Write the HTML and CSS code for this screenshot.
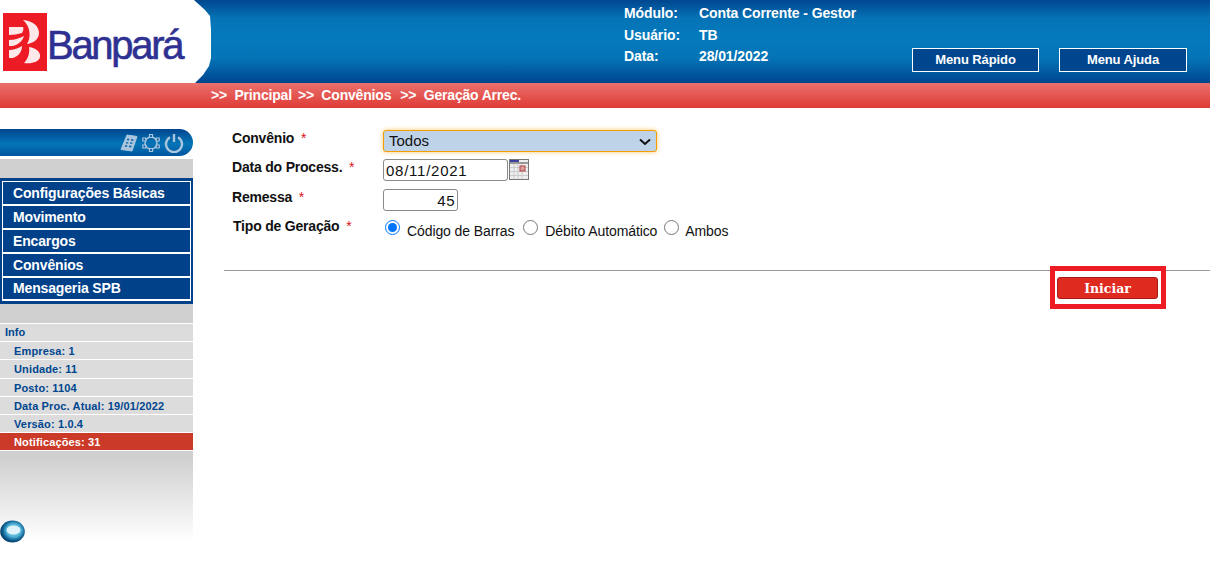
FILE: index.html
```html
<!DOCTYPE html>
<html lang="pt-BR">
<head>
<meta charset="utf-8">
<title>Banpará</title>
<link rel="stylesheet" href="styles.css">
</head>
<body>
<header class="top">
  <div class="logo">
    <svg class="logo-mark" viewBox="0 0 44 58" width="44" height="58" aria-hidden="true">
      <rect width="44" height="58" fill="#ed1c24"/>
      <path d="M20 7 C30 8 36 13 36 20 C36 26 31 30 24 31 C28 25 28 14 20 7 Z M6 14 L20 14 C21 16 20 18 19 20 C15 21 10 22 6 22 Z M6 27 C12 27 17 25 21 23 C20 27 17 30 13 32 C11 33 8 33 6 33 Z M6 37 C11 37 16 35 19 33 C19 38 16 43 10 45 L6 45 Z M26 34 C33 35 38 39 37 44 C36 49 29 51 21 50 C25 46 27 40 26 34 Z" fill="#fff" opacity=".9"/>
    </svg>
    <span class="logo-text">Banpará</span>
  </div>
  <dl class="session">
    <div class="session-row"><dt>Módulo:</dt><dd>Conta Corrente - Gestor</dd></div>
    <div class="session-row"><dt>Usuário:</dt><dd>TB</dd></div>
    <div class="session-row"><dt>Data:</dt><dd>28/01/2022</dd></div>
  </dl>
  <div class="top-buttons">
    <a class="top-btn">Menu Rápido</a>
    <a class="top-btn top-btn-last">Menu Ajuda</a>
  </div>
</header>
<nav class="crumbs">
  <span>&gt;&gt;&nbsp; Principal</span>
  <span>&gt;&gt;&nbsp; Convênios</span>
  <span class="crumb-last">&gt;&gt;&nbsp; Geração Arrec.</span>
</nav>
<div class="page">
  <aside class="side">
    <div class="pill">
      <svg class="pill-icon" viewBox="0 0 18 18" width="18" height="18" aria-hidden="true">
        <path d="M7 1 L17 2.500 L12 17 L1 15.500 Z" fill="#a9c6de" stroke="#a9c6de" stroke-linejoin="round"/>
        <path d="M7 5.500h2.200M11 6h2.400M6 8.800h2.200M10 9.200h2.400M5 12h2.200M9 12.500h2.400" stroke="#0a5ea6" stroke-width="1.300" fill="none"/>
      </svg>
      <svg class="pill-icon" viewBox="0 0 20 20" width="20" height="20" aria-hidden="true">
        <circle cx="10" cy="10" r="6" fill="none" stroke="#a9c6de" stroke-width="1.500"/>
        <path d="M8.500 1.500h3v3h-3zM8.500 15.500h3v3h-3zM1.800 5h3v3h-3zM15.200 5h3v3h-3zM1.800 12h3v3h-3zM15.200 12h3v3h-3z" fill="#0a5ea6" stroke="#a9c6de" stroke-width="1.200"/>
      </svg>
      <svg class="pill-icon" viewBox="0 0 20 20" width="20" height="20" aria-hidden="true">
        <path d="M6 4.200A8 8 0 1 0 14 4.200" fill="none" stroke="#a9c6de" stroke-width="2.400"/>
        <path d="M10 1v8" stroke="#a9c6de" stroke-width="2.400"/>
      </svg>
    </div>
    <div class="side-body">
      <ul class="menu">
        <li>Configurações Básicas</li>
        <li>Movimento</li>
        <li>Encargos</li>
        <li>Convênios</li>
        <li class="menu-last">Mensageria SPB</li>
      </ul>
      <ul class="info">
        <li class="info-head">Info</li>
        <li>Empresa: 1</li>
        <li>Unidade: 11</li>
        <li>Posto: 1104</li>
        <li>Data Proc. Atual: 19/01/2022</li>
        <li>Versão: 1.0.4</li>
        <li class="info-alert">Notificações: 31</li>
      </ul>
      <svg class="orb" viewBox="0 0 25 23" width="25" height="23" aria-hidden="true">
        <defs>
          <radialGradient id="orbfill" cx=".55" cy=".45" r=".6">
            <stop offset="0" stop-color="#a8e2f2"/>
            <stop offset=".5" stop-color="#4fb0d6"/>
            <stop offset=".75" stop-color="#0b5f90"/>
            <stop offset="1" stop-color="#052f55"/>
          </radialGradient>
        </defs>
        <ellipse cx="12.500" cy="11.500" rx="12.300" ry="11" fill="url(#orbfill)"/>
        <ellipse cx="13.500" cy="10" rx="7" ry="4.500" fill="#dff4fa"/>
      </svg>
    </div>
  </aside>
  <main class="content">
    <form class="form">
      <label class="lbl lbl-a">Convênio <b>*</b></label>
      <div class="sel-wrap">
        <select class="sel"><option>Todos</option></select>
        <svg class="chev" viewBox="0 0 12 8" width="12" height="8" aria-hidden="true"><path d="M1 1.500 L6 6 L11 1.500" fill="none" stroke="#111" stroke-width="2"/></svg>
      </div>
      <label class="lbl lbl-b">Data do Process. <b>*</b></label>
      <div class="date-wrap">
        <input class="txt date" type="text" value="08/11/2021">
        <svg class="cal" viewBox="0 0 20 21" width="20" height="21" aria-hidden="true">
          <rect x=".5" y=".5" width="19" height="20" fill="#eee" stroke="#777"/>
          <rect x="1" y="1" width="9" height="2" fill="#3b3f9e"/>
          <rect x="1" y="3" width="18" height="2" fill="#999"/>
          <path d="M1 8.500h18M1 12.500h18M1 16.500h18M5 5v15M9 5v15M13 5v15" stroke="#ccc"/>
          <rect x="11" y="7" width="5" height="5" fill="#d9a0a0" stroke="#b04040"/>
        </svg>
      </div>
      <label class="lbl lbl-c">Remessa <b>*</b></label>
      <input class="txt num" type="text" value="45">
      <label class="lbl lbl-d">Tipo de Geração <b>*</b></label>
      <div class="radios">
        <input type="radio" name="t" id="r1" checked><label for="r1">Código de Barras</label>
        <input type="radio" name="t" id="r2"><label for="r2">Débito Automático</label>
        <input type="radio" name="t" id="r3"><label for="r3">Ambos</label>
      </div>
    </form>
    <div class="actions">
      <div class="frame"><button class="start" type="button">Iniciar</button></div>
    </div>
  </main>
</div>
</body>
</html>
```
FILE: styles.css
```css
* { box-sizing: border-box; }
html, body { margin: 0; padding: 0; background: #fff; }
body { font-family: "Liberation Sans", Arial, sans-serif; color: #111; width: 1210px; height: 561px; overflow: hidden; }

.top {
  height: 83px;
  display: flex;
  background: linear-gradient(#00468f 0%, #0573b5 22%, #047abd 45%, #0474b6 70%, #00468f 100%);
  color: #fff;
  font-weight: bold;
  font-size: 14px;
  letter-spacing: -.1px;
}
.logo {
  width: 212px;
  height: 83px;
  background: #fff;
  clip-path: polygon(0 0, 194px 0, 205px 10px, 210px 16px, 211px 30px, 211px 58px, 209px 66px, 203px 75px, 195px 83px, 0 83px);
  display: flex;
  align-items: flex-start;
  padding: 13px 0 0 3px;
  flex: none;
}
.logo-mark { flex: none; }
.logo-text {
  margin: 9px 0 0 0;
  font-size: 40px;
  line-height: 46px;
  letter-spacing: -2.300px;
  color: #2e3192;
  font-weight: normal;
  -webkit-text-stroke: .6px #2e3192;
}
.session { margin: 3px 0 0 412px; width: 288px; flex: none; }
.session-row { display: flex; height: 21.500px; line-height: 21.500px; }
.session dt { width: 75px; }
.session dd { margin: 0; }
.top-buttons { display: flex; gap: 20px; margin: 48px 0 0 0; }
.top-btn {
  width: 127px;
  height: 24px;
  border: 1px solid #fff;
  background: #00468f;
  font-size: 13px;
  line-height: 22px;
  text-align: center;
}
.top-btn-last { width: 128px; }

.crumbs {
  height: 25px;
  background: linear-gradient(#ea706c, #df3b36);
  color: #fff;
  font-weight: bold;
  font-size: 14px;
  letter-spacing: -.18px;
  line-height: 25px;
  padding-left: 211px;
  display: flex;
  gap: 6px;
  white-space: nowrap;
}
.crumb-last { margin-left: 3px; }

.page { display: flex; align-items: flex-start; margin-top: 21px; }
.side { width: 193px; flex: none; }
.pill {
  height: 27px;
  border-radius: 0 14px 14px 0;
  background: linear-gradient(#00468f, #0475b8 55%, #00569f);
  display: flex;
  justify-content: flex-end;
  align-items: center;
  gap: 3px;
  padding-right: 9px;
}
.side-body {
  margin-top: 3px;
  height: 382px;
  padding-top: 19px;
  background: linear-gradient(#d0d0d0 0%, #cfcfcf 78%, #fff 100%);
  position: relative;
}
.menu {
  list-style: none;
  margin: 0;
  padding: 3px 2px;
  background: #00418a;
  height: 126px;
  display: flex;
  flex-direction: column;
}
.menu li {
  height: 24px;
  border: 1px solid #fff;
  border-bottom-width: 2px;
  border-top-width: 0;
  color: #fff;
  font-weight: bold;
  font-size: 14px;
  letter-spacing: -.15px;
  line-height: 23px;
  padding-left: 10px;
  white-space: nowrap;
}
.menu li:first-child { border-top-width: 1px; height: 25px; }
.menu .menu-last { line-height: 21px; }
.info { list-style: none; margin: 19px 0 0; padding: 0; border-top: 1px solid #fff; }
.info li {
  height: 18.200px;
  line-height: 18px;
  background: #dcdcdc;
  border-bottom: 1px solid #fff;
  color: #00468f;
  font-size: 11px;
  font-weight: bold;
  letter-spacing: .14px;
  padding-left: 14px;
  white-space: nowrap;
}
.info .info-head { padding-left: 5px; letter-spacing: 0; line-height: 17px; }
.info .info-alert { background: #cb3a28; color: #fff; }
.orb { position: absolute; left: 0; bottom: -2px; }

.content { flex: 1; padding: 0 0 0 31px; }
.form {
  display: grid;
  grid-template-columns: 152px 1fr;
  grid-template-rows: 30px 30px 29px 30px;
  align-items: start;
  padding-left: 7px;
}
.lbl { font-weight: bold; font-size: 14px; letter-spacing: -.2px; color: #111; white-space: nowrap; padding: 1px 0 0 1px; }
.lbl b { color: #d8141c; font-weight: normal; margin-left: 3px; }
.lbl-b { padding-top: 0; }
.lbl-c { padding-top: 0; }
.lbl-d { padding: 0 0 0 2px; }
.sel-wrap { position: relative; width: 274px; height: 23px; }
.sel {
  display: block;
  width: 274px;
  height: 22px;
  margin-top: 1px;
  padding: 0 0 2px 5px;
  appearance: none;
  -webkit-appearance: none;
  background-color: #bfd3e8;
  border: 1px solid #f59c00;
  border-radius: 3px;
  box-shadow: 0 0 5px rgba(245, 156, 0, .55);
  font: 15px "Liberation Sans", Arial, sans-serif;
  color: #111;
  outline: none;
}
.chev { position: absolute; left: 256px; top: 9px; pointer-events: none; }
.date-wrap { display: flex; align-items: flex-start; }
.txt {
  height: 22px;
  border: 1px solid #8a8a8a;
  border-radius: 3px;
  padding: 1px 2px 0 2px;
  font: 15px "Liberation Sans", Arial, sans-serif;
  letter-spacing: .75px;
  color: #111;
  background: #fff;
  outline: none;
}
.date { width: 125px; }
.cal { margin-left: 1px; flex: none; }
.num { width: 75px; text-align: right; letter-spacing: .5px; }
.radios { display: flex; align-items: flex-start; font-size: 14px; letter-spacing: -.1px; white-space: nowrap; margin-top: 2px; }
.radios input { width: 15px; height: 15px; margin: 0; flex: none; }
.radios input:first-child { margin-left: 2px; }
.radios label { margin: 3px 8px 0 7px; }
.radios label:nth-of-type(1) { margin-right: 9px; }
.radios label:nth-of-type(2) { margin-left: 7px; margin-right: 7px; }
.radios label:nth-of-type(3) { margin-left: 6px; }
.actions {
  margin-top: 22px;
  border-top: 1px solid #999;
  display: flex;
  justify-content: flex-end;
  padding-right: 44px;
  height: 0;
}
.frame {
  margin-top: -5px;
  width: 116px;
  height: 43px;
  border: 5px solid #ed1c24;
  background: #fff;
  padding: 6px 3px 0 2px;
  flex: none;
}
.start {
  display: block;
  width: 101px;
  height: 22px;
  border: 1px solid #a81c18;
  border-radius: 3px;
  background: #df2a20;
  color: #fff;
  font: bold 12.500px "DejaVu Serif", serif;
  padding: 0;
}
```
